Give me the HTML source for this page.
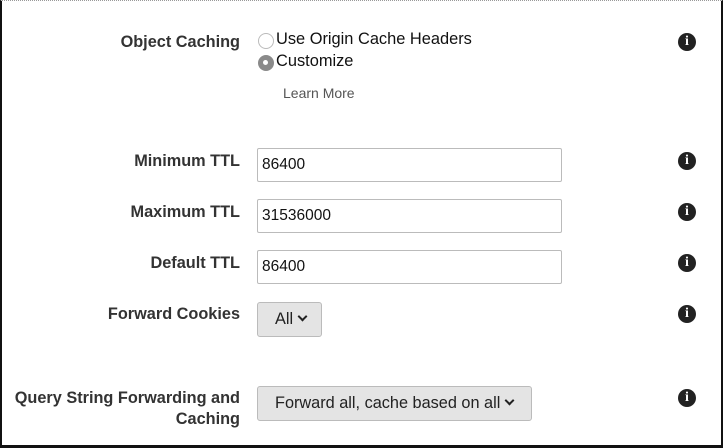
<!DOCTYPE html>
<html><head><style>
body{margin:0;width:724px;height:448px;background:#fff;font-family:"Liberation Sans",sans-serif;position:relative;overflow:hidden}
.frame{position:absolute;left:0;top:0;width:719px;height:444px;border-left:2px solid #111;border-right:2px solid #111;border-bottom:3px solid #111;border-top:1px dotted #999}
.lbl{position:absolute;right:484px;font-weight:bold;font-size:16.3px;color:#333;text-align:right;line-height:21px}
.inp{position:absolute;left:257px;font-size:15.5px;color:#111;line-height:32px;padding-left:4px;box-sizing:border-box;width:305px;height:34px;border:1px solid #bbb;border-radius:2px}
.btn{position:absolute;left:257px;border:1px solid #bbb;border-radius:3px;background:#e4e4e4;font-size:16.3px;color:#222;box-sizing:border-box;padding-left:17px;line-height:33px;height:35px}
.info{position:absolute;left:678px;width:18px;height:18px;border-radius:50%;background:#222;color:#fff;font-weight:bold;font-size:14px;text-align:center;line-height:18px;font-family:"Liberation Serif",serif}
.chev{display:inline-block;width:5px;height:5px;border-right:2.5px solid #222;border-bottom:2.5px solid #222;transform:rotate(45deg);margin-left:6px;position:relative;top:-4px}
.radio{position:absolute;left:258px;width:16px;height:16px;border-radius:50%;box-sizing:border-box}
.rt{position:absolute;left:276px;font-size:16.4px;color:#111}
</style></head><body>
<div class="frame"></div>
<div class="lbl" style="top:32px">Object Caching</div>
<div class="radio" style="top:33px;border:1px solid #bbb"></div>
<div class="rt" style="top:30px">Use Origin Cache Headers</div>
<div class="radio" style="top:55px;background:#8a8a8a"><div style="position:absolute;left:5px;top:5px;width:5px;height:5px;border-radius:50%;background:#fff"></div></div>
<div class="rt" style="top:52px">Customize</div>
<div style="position:absolute;left:283px;top:85px;font-size:14px;color:#555">Learn More</div>
<div class="info" style="top:33px">i</div>

<div class="lbl" style="top:151px">Minimum TTL</div>
<div class="inp" style="top:148px">86400</div>
<div class="info" style="top:152px">i</div>
<div class="lbl" style="top:202px">Maximum TTL</div>
<div class="inp" style="top:199px">31536000</div>
<div class="info" style="top:203px">i</div>
<div class="lbl" style="top:253px">Default TTL</div>
<div class="inp" style="top:250px">86400</div>
<div class="info" style="top:254px">i</div>
<div class="lbl" style="top:304px">Forward Cookies</div>
<div class="btn" style="top:302px;width:65px">All<span class="chev"></span></div>
<div class="info" style="top:305px">i</div>
<div class="lbl" style="top:388px">Query String Forwarding and<br>Caching</div>
<div class="btn" style="top:386px;width:275px">Forward all, cache based on all<span class="chev"></span></div>
<div class="info" style="top:389px">i</div>
</body></html>
